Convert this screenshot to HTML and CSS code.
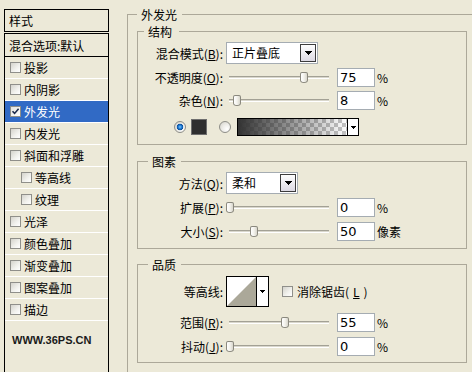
FILE: index.html
```html
<!DOCTYPE html>
<html lang="zh-CN">
<head>
<meta charset="utf-8">
<title>图层样式 - 外发光</title>
<link rel="stylesheet" href="styles.css">
</head>
<body>
<div class="dialog">
  <aside class="styles-panel">
    <div class="panel-head">样式</div>
    <div class="panel-body">
      <ul class="style-list">
        <li class="style-item blend">混合选项:默认</li>
        <li class="style-item"><span class="cb"></span>投影</li>
        <li class="style-item"><span class="cb"></span>内阴影</li>
        <li class="style-item selected"><span class="cb"><svg width="9" height="9" viewBox="0 0 9 9"><path d="M1.5 4.2 3.6 6.4 7.6 1.8" fill="none" stroke="#1d2b4c" stroke-width="1.6"/></svg></span>外发光</li>
        <li class="style-item"><span class="cb"></span>内发光</li>
        <li class="style-item"><span class="cb"></span>斜面和浮雕</li>
        <li class="style-item sub"><span class="cb"></span>等高线</li>
        <li class="style-item sub"><span class="cb"></span>纹理</li>
        <li class="style-item"><span class="cb"></span>光泽</li>
        <li class="style-item"><span class="cb"></span>颜色叠加</li>
        <li class="style-item"><span class="cb"></span>渐变叠加</li>
        <li class="style-item"><span class="cb"></span>图案叠加</li>
        <li class="style-item"><span class="cb"></span>描边</li>
      </ul>
      <div class="site">WWW.36PS.CN</div>
    </div>
  </aside>

  <fieldset class="group outer">
    <legend>外发光</legend>

    <fieldset class="group inner structure">
      <legend>结构</legend>
      <div class="row tall">
        <span class="lbl">混合模式(<u>B</u>):</span>
        <div class="select mode"><span class="sel-text">正片叠底</span><span class="sel-btn"><svg class="tri" width="7" height="4" viewBox="0 0 7 4"><path d="M0 0h7v1h-1v1h-1v1h-1v1h-1v-1h-1v-1h-1v-1h-1z"/></svg></span></div>
      </div>
      <div class="row mt3">
        <span class="lbl">不透明度(<u>O</u>):</span>
        <div class="slider"><span class="thumb" style="margin-left:74px"></span></div>
        <input class="num" type="text" value="75"><span class="unit">%</span>
      </div>
      <div class="row mt2">
        <span class="lbl">杂色(<u>N</u>):</span>
        <div class="slider"><span class="thumb" style="margin-left:7px"></span></div>
        <input class="num" type="text" value="8"><span class="unit">%</span>
      </div>
      <div class="row tall mt5 colors">
        <span class="radio on"></span>
        <span class="swatch"></span>
        <span class="radio"></span>
        <div class="grad-pick"><span class="grad"></span><span class="grad-btn"><svg class="tri" width="5" height="3" viewBox="0 0 5 3"><path d="M0 0h5v1h-1v1h-1v1h-1v-1h-1v-1h-1z"/></svg></span></div>
      </div>
    </fieldset>

    <fieldset class="group inner elements">
      <legend>图素</legend>
      <div class="row tall">
        <span class="lbl">方法(<u>Q</u>):</span>
        <div class="select method"><span class="sel-text">柔和</span><span class="sel-btn"><svg class="tri" width="7" height="4" viewBox="0 0 7 4"><path d="M0 0h7v1h-1v1h-1v1h-1v1h-1v-1h-1v-1h-1v-1h-1z"/></svg></span></div>
      </div>
      <div class="row mt3">
        <span class="lbl">扩展(<u>P</u>):</span>
        <div class="slider"><span class="thumb" style="margin-left:0px"></span></div>
        <input class="num" type="text" value="0"><span class="unit">%</span>
      </div>
      <div class="row mt3">
        <span class="lbl">大小(<u>S</u>):</span>
        <div class="slider"><span class="thumb" style="margin-left:24px"></span></div>
        <input class="num" type="text" value="50"><span class="unit">像素</span>
      </div>
    </fieldset>

    <fieldset class="group inner quality">
      <legend>品质</legend>
      <div class="row contour-row">
        <span class="lbl">等高线:</span>
        <div class="contour"><span class="contour-preview"><svg width="29" height="29" viewBox="0 0 29 29"><polygon points="0,29 29,0 29,29" fill="#aba899"/></svg></span><span class="contour-btn"><svg class="tri" width="5" height="3" viewBox="0 0 5 3"><path d="M0 0h5v1h-1v1h-1v1h-1v-1h-1v-1h-1z"/></svg></span></div>
        <label class="aa"><span class="cb"></span>消除锯齿(<u>L</u>)</label>
      </div>
      <div class="row mt5">
        <span class="lbl">范围(<u>R</u>):</span>
        <div class="slider"><span class="thumb" style="margin-left:55px"></span></div>
        <input class="num" type="text" value="55"><span class="unit">%</span>
      </div>
      <div class="row mt3">
        <span class="lbl">抖动(<u>J</u>):</span>
        <div class="slider"><span class="thumb" style="margin-left:0px"></span></div>
        <input class="num" type="text" value="0"><span class="unit">%</span>
      </div>
    </fieldset>
  </fieldset>
</div>
</body>
</html>
```

FILE: styles.css
```css
* { box-sizing: border-box; }

html, body {
  margin: 0;
  padding: 0;
}

body {
  width: 472px;
  height: 372px;
  overflow: hidden;
  background: #ece9d8;
  color: #000;
  font-family: "Noto Sans CJK SC", "Noto Sans CJK JP", sans-serif;
  font-size: 12px;
}

.dialog {
  display: flex;
  align-items: flex-start;
  width: 472px;
  height: 372px;
  overflow: hidden;
}

/* ---------- left styles list ---------- */
.styles-panel {
  flex: 0 0 105px;
  width: 105px;
  height: 380px;
  margin: 9px 0 0 4px;
  display: flex;
  flex-direction: column;
}

.panel-head {
  height: 23px;
  border: 1px solid #000;
  margin-bottom: 1px;
  padding-left: 4px;
  line-height: 21px;
}

.panel-body {
  flex: 1;
  border: 1px solid #000;
  border-bottom: 0;
}

.style-list {
  list-style: none;
  margin: 0;
  padding: 0;
}

.style-item {
  display: flex;
  align-items: center;
  gap: 3px;
  height: 22px;
  padding-left: 5px;
  border-bottom: 1px solid #fff;
  white-space: nowrap;
}

.style-item.blend {
  height: 23px;
  padding-left: 4px;
  border-bottom-color: #000;
}

.style-item.sub { padding-left: 16px; }

.style-item.selected {
  background: #316ac5;
  color: #fff;
}

.cb {
  flex: 0 0 11px;
  width: 11px;
  height: 11px;
  border: 1px solid #8f8f8a;
  background: linear-gradient(135deg, #d4d3cc 0%, #f2f2ee 60%, #fff 100%);
  display: flex;
  align-items: center;
  justify-content: center;
}

.selected .cb { background: linear-gradient(135deg, #e4e3de, #fff); }

.site {
  margin-top: 13px;
  padding-left: 7px;
  font: bold 11px/13px "Liberation Sans", Arial, sans-serif;
  color: #1a1a1a;
}

/* ---------- group boxes ---------- */
.group {
  margin: 0;
  min-width: 0;
  border: 1px solid #aca899;
}

.group > legend {
  height: 17px;
  padding: 0 5px 0 4px;
  line-height: 17px;
}

.outer {
  flex: 0 0 350px;
  width: 350px;
  margin: 6px 0 0 18px;
  padding: 0 9px 14px;
}

.inner {
  width: 330px;
  padding: 2px 0 6px;
}

.structure > legend { margin-left: 6px; padding-right: 7px; }
.elements, .quality { margin-top: 8px; }
.quality { margin-top: 7px; padding: 3px 0 5px; }
.elements > legend, .quality > legend { margin-left: 10px; }

/* ---------- rows ---------- */
.row {
  display: flex;
  align-items: center;
  height: 21px;
}

.row.tall { height: 22px; }
.mt2 { margin-top: 2px; }
.mt3 { margin-top: 3px; }
.mt5 { margin-top: 5px; }

.lbl {
  flex: 0 0 85px;
  margin-right: 3px;
  text-align: right;
  white-space: nowrap;
}

/* select */
.select {
  display: flex;
  height: 22px;
  border: 1px solid #a5acb2;
  background: #fff;
}

.select.mode { width: 92px; }
.select.method { width: 72px; }

.sel-text {
  flex: 1;
  padding-left: 5px;
  line-height: 20px;
}

.sel-btn {
  flex: 0 0 16px;
  margin: 1px;
  border: 1px solid #3c3c3c;
  background: linear-gradient(#fdfdfd, #dcd9e3);
  display: flex;
  align-items: center;
  justify-content: center;
}

.tri { display: block; fill: #000; shape-rendering: crispEdges; }

/* slider */
.slider {
  flex: 0 0 107px;
  width: 107px;
  height: 11px;
  display: flex;
  background: linear-gradient(#a3a195 0 1px, #d9d7cc 1px 2px, #fff 2px 3px) 3px 4px / 100px 3px no-repeat;
}

.thumb {
  width: 8px;
  height: 11px;
  border: 1px solid #8a887e;
  border-radius: 2px 2px 4px 4px / 2px 2px 3px 3px;
  background: linear-gradient(90deg, #fff 0%, #f3f2ec 50%, #d8d6cc 100%);
}

/* numeric input */
.num {
  width: 38px;
  height: 19px;
  margin: 0 0 0 4px;
  padding: 0 0 0 2px;
  border: 1px solid #a5acb2;
  background: #fff;
  color: #000;
  font: 13px "DejaVu Sans", sans-serif;
  outline: none;
}

.unit {
  margin-left: 2px;
  font-size: 12px;
}

/* colors row */
.colors { padding-left: 36px; }

.radio {
  flex: 0 0 12px;
  width: 12px;
  height: 12px;
  border: 1px solid #8e8e88;
  border-radius: 50%;
  background: radial-gradient(circle at 70% 70%, #fff 0%, #ecebe6 50%, #cfcec6 100%);
}

.radio.on {
  background:
    radial-gradient(circle at 50% 50%, #7cc8ff 0, #2a86dc 1.5px, #0b4f9c 3px, rgba(11,79,156,0) 3.6px),
    radial-gradient(circle at 70% 70%, #fff 0%, #ecebe6 50%, #cfcec6 100%);
}

.swatch {
  flex: 0 0 16px;
  width: 16px;
  height: 16px;
  margin: 0 12px 0 5px;
  border: 1px solid #6e6e6e;
  background: #2f2f2f;
}

.grad-pick {
  display: flex;
  width: 122px;
  height: 18px;
  margin-left: 6px;
  border: 1px solid #000;
}

.grad {
  flex: 0 0 109px;
  background:
    linear-gradient(90deg, #333 0%, rgba(51,51,51,0) 100%),
    repeating-conic-gradient(#c4c4c4 0 25%, #fff 0 50%) 0 0 / 8px 8px;
}

.grad-btn {
  flex: 0 0 11px;
  border-left: 1px solid #000;
  background: #fff;
  display: flex;
  align-items: center;
  justify-content: center;
}

/* contour row */
.contour-row { height: 31px; }

.contour {
  display: flex;
  width: 43px;
  height: 31px;
  border: 1px solid #000;
}

.contour-preview {
  flex: 0 0 29px;
  background: #fff;
}

.contour-preview svg { display: block; }

.contour-btn {
  flex: 0 0 12px;
  border-left: 1px solid #000;
  background: #fff;
  display: flex;
  align-items: center;
  justify-content: center;
}

.aa {
  display: flex;
  align-items: center;
  gap: 4px;
  margin-left: 13px;
  white-space: nowrap;
}
```
